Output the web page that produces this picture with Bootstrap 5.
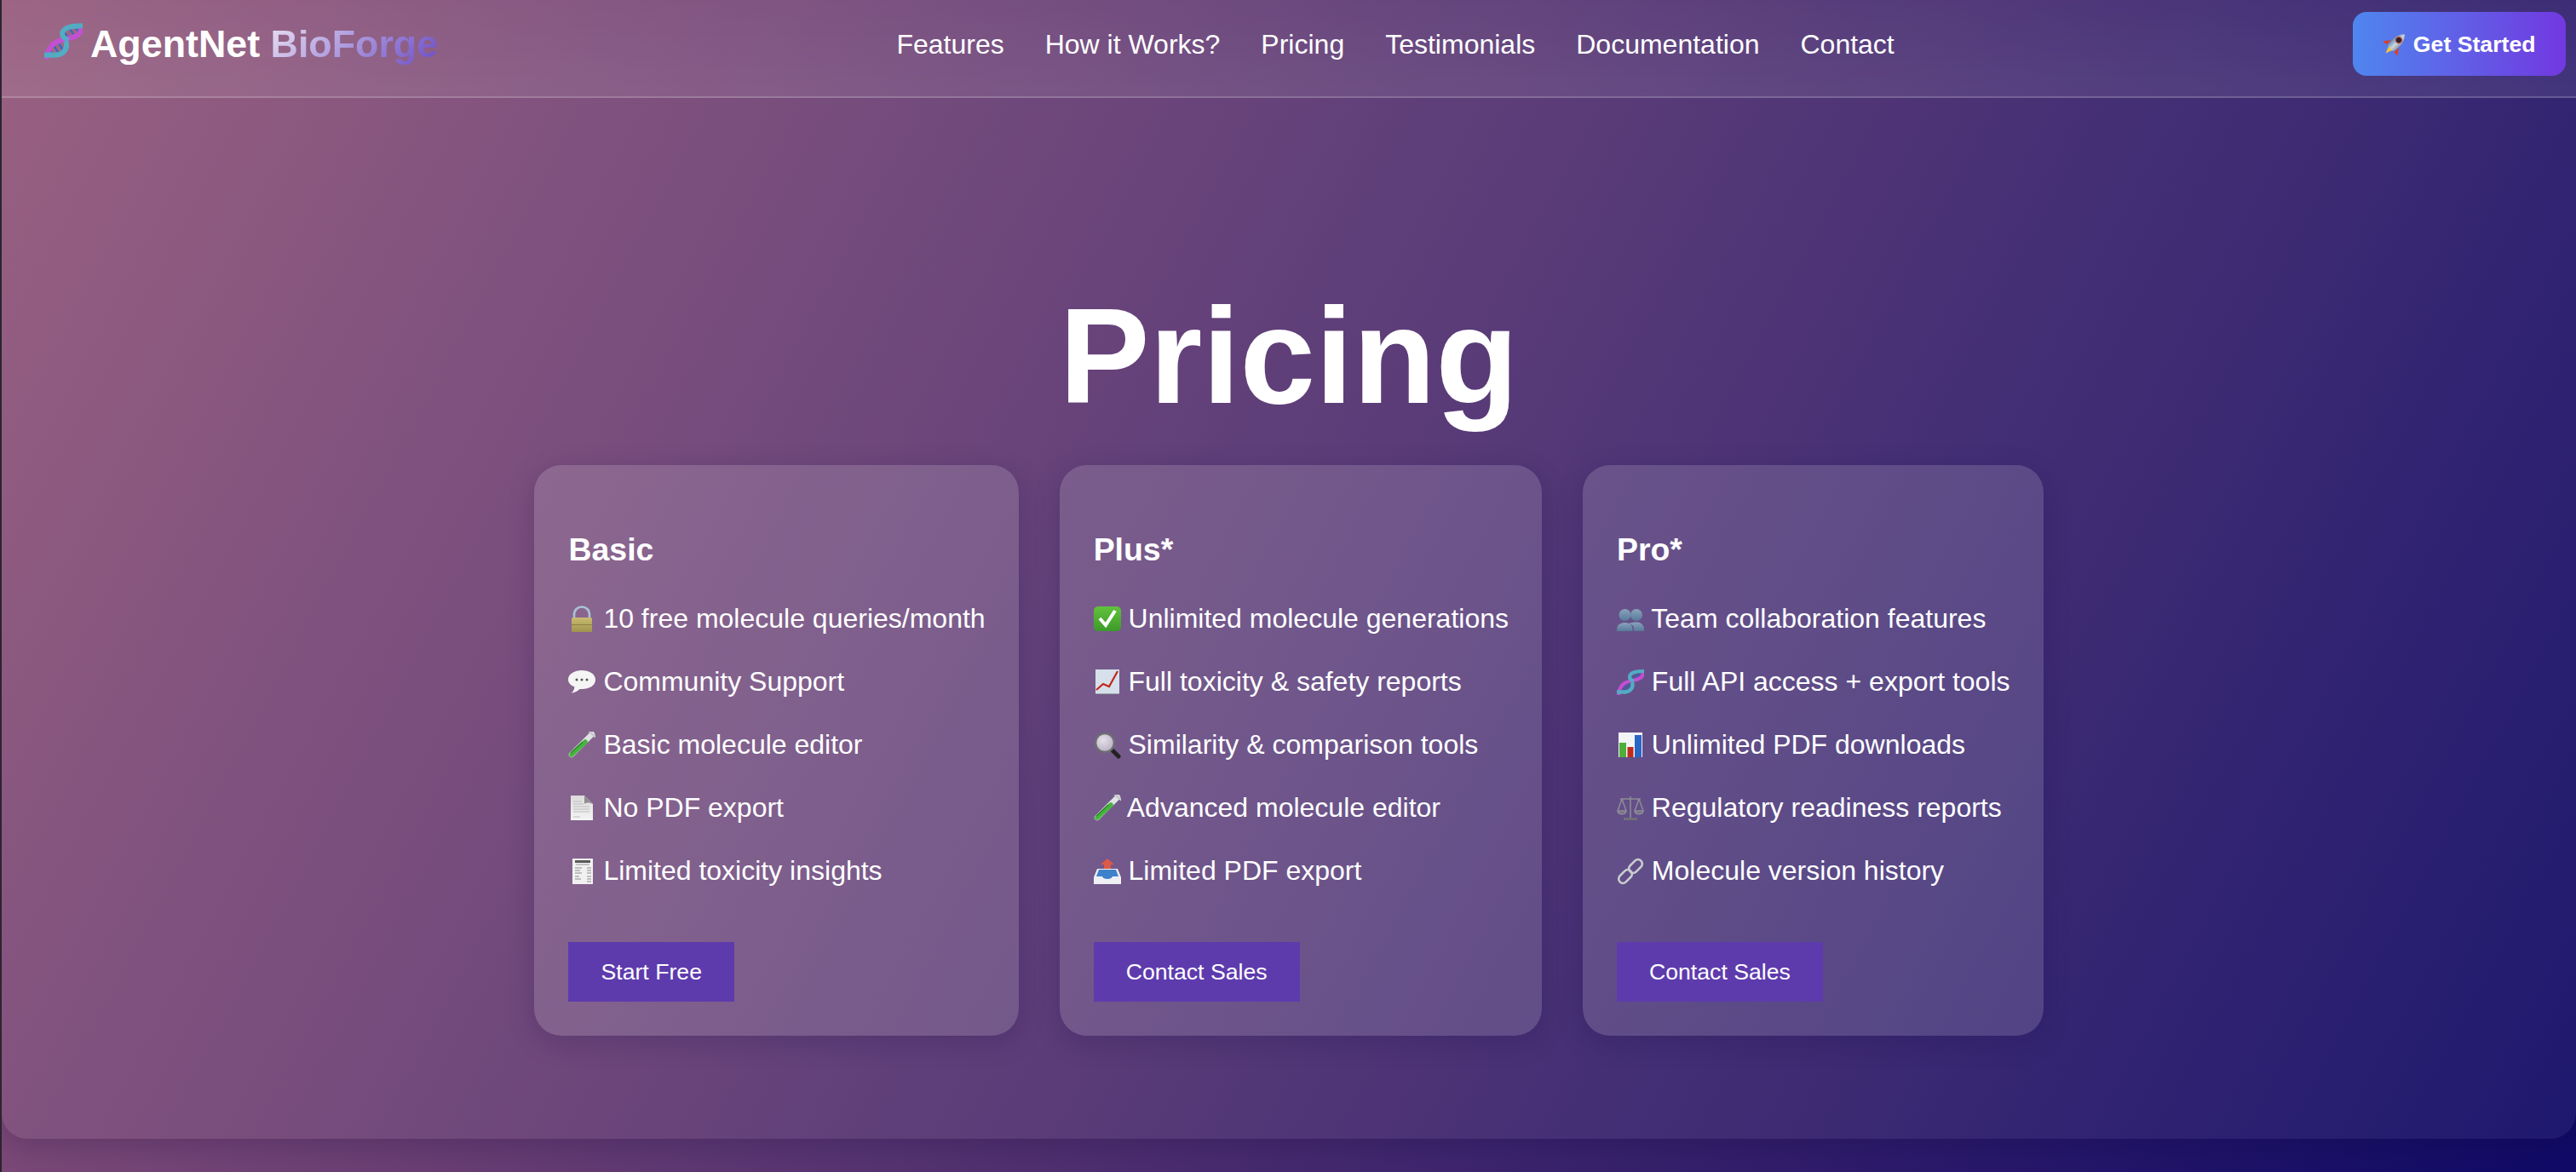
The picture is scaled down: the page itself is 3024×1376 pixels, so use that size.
<!DOCTYPE html>
<html lang="en">
<head>
<meta charset="utf-8">
<title>AgentNet BioForge – Pricing</title>
<link href="https://cdn.jsdelivr.net/npm/bootstrap@5.3.0/dist/css/bootstrap.min.css" rel="stylesheet">
<style>
html,body{height:1376px;overflow:hidden}
body{font-family:"Liberation Sans",Arial,sans-serif;color:#fff;background:linear-gradient(118deg,#93577a 0%,#100a66 100%);border-left:2px solid #2b2530;}
.defs-box{display:block;width:0;height:0}
.shell{margin:0;height:1337px;border-radius:0 0 30px 30px;background:rgba(255,255,255,.06);box-shadow:0 8px 32px rgba(10,5,50,.2)}
.topbar{height:115px;padding:14px 12px 24px 50px;border-bottom:2px solid rgba(255,255,255,.22);background:linear-gradient(180deg,rgba(255,255,255,.03),rgba(255,255,255,.08));flex-wrap:nowrap}
.brand-line{font-size:44.8px;font-weight:700;color:#fff;padding:0;margin:0;line-height:1.2;letter-spacing:0}
.brand-line:hover{color:#fff}
.brand-line .emo{width:45px;height:45px;vertical-align:-4px;margin-right:9px}
.brand-grad{background:linear-gradient(135deg,#e8e0f2 0%,#6a4cc6 100%);-webkit-background-clip:text;background-clip:text;color:transparent}
.menu-row{gap:48px;flex-wrap:nowrap}
.menu-row .nav-link{font-size:32px;color:#fff;padding:0;line-height:1.5}
.cta-btn{width:250px;height:75px;padding:0;border:0;border-radius:16px;font-size:26.67px;font-weight:700;color:#fff;background:linear-gradient(90deg,#4f86ee,#7238e0)}
.cta-btn:hover{color:#fff}
.cta-btn .emo{width:28px;height:28px;vertical-align:-5px}
.hero{padding-top:208px}
.hero-title{font-size:159px;font-weight:700;line-height:190px;margin:0 0 33px;text-align:center}
.tier-row{gap:48px}
.tier{flex:0 0 auto;background:rgba(255,255,255,.14);border:0;border-radius:32px;color:#fff;box-shadow:0 8px 32px rgba(20,10,70,.2)}
.tier .card-body{padding:77px 39px 40px 40px;flex:0 0 auto}
.tier .card-title{font-size:37.44px;font-weight:700;line-height:44px;margin:0 0 35px}
.tier ul{margin:0 0 60px;padding:0;list-style:none}
.tier li{font-size:32px;line-height:48px;margin-bottom:26px;white-space:nowrap}
.tier li:last-child{margin-bottom:0}
.emo{display:inline-block;width:32px;height:32px;vertical-align:-6px}
.plan-btn{display:inline-block;height:70px;line-height:70px;padding:0 38px;border:0;border-radius:0;background:#5e3bad;color:#fff;font-size:26.67px}
.plan-btn:hover{background:#5e3bad;color:#fff}
</style>
</head>
<body>
<svg class="defs-box" aria-hidden="true">
<defs>
<linearGradient id="g-gold" x1="0" y1="0" x2="0" y2="1"><stop offset="0" stop-color="#c9bb70"/><stop offset="1" stop-color="#a0934e"/></linearGradient>
<linearGradient id="g-green" x1="0" y1="0" x2="0" y2="1"><stop offset="0" stop-color="#62c23c"/><stop offset="1" stop-color="#3d9a2a"/></linearGradient>
<linearGradient id="g-page" x1="0" y1="0" x2="0" y2="1"><stop offset="0" stop-color="#dcdcdc"/><stop offset="1" stop-color="#f4f4f4"/></linearGradient>
<linearGradient id="g-slate" x1="0" y1="0" x2="0" y2="1"><stop offset="0" stop-color="#8aa2bc"/><stop offset="1" stop-color="#567a9a"/></linearGradient>
<linearGradient id="g-rocket" x1="0" y1="0" x2="1" y2="0"><stop offset="0" stop-color="#5f8db8"/><stop offset=".55" stop-color="#cfd6dc"/><stop offset="1" stop-color="#8f9aa6"/></linearGradient>
<radialGradient id="g-lens" cx=".4" cy=".35" r=".7"><stop offset="0" stop-color="#e6e0ea"/><stop offset="1" stop-color="#b6aec2"/></radialGradient>
</defs>
<symbol id="i-lock" viewBox="0 0 32 32"><path d="M7 16V11C7 5 11 1.500 16 1.500S25 5 25 11v5" fill="none" stroke="#a9c3d6" stroke-width="2.600"/><rect x="4" y="14" width="24" height="17" rx="1.500" fill="url(#g-gold)"/><rect x="4" y="22" width="24" height="1" fill="#8d8244"/></symbol>
<symbol id="i-bubble" viewBox="0 0 32 32"><path d="M16 2C7.500 2 0 6 0 13c0 4 3.500 7 7.500 8.500C7 25 5.500 27.500 3.500 29 8 28 11.500 26 13.500 24c1 .1 1.700.1 2.500.1 8.500 0 16-4 16-11S24.500 2 16 2Z" fill="#f5f5f5"/><circle cx="10" cy="13" r="1.500" fill="#555"/><circle cx="16" cy="13" r="1.500" fill="#555"/><circle cx="22" cy="13" r="1.500" fill="#555"/></symbol>
<symbol id="i-tube" viewBox="0 0 32 32"><path d="M28 3 4 27" stroke="#dfe3e4" stroke-width="6.500" stroke-linecap="round"/><path d="M20 12 4 27" stroke="#45b53c" stroke-width="5.500" stroke-linecap="round"/><path d="M17 12 3 25" stroke="#2a7e28" stroke-width="1.300"/><path d="M25 0 32 6" stroke="#c8c8cc" stroke-width="2.500" stroke-linecap="round"/></symbol>
<symbol id="i-page" viewBox="0 0 32 32"><path d="M3 1H19L29 11V30H3Z" fill="url(#g-page)"/><path d="M19 1 29 11C25 9 21 9 19 11Z" fill="#8f8f8f"/><g stroke="#bcbcbc"><path d="M6 8H16M6 11H18M6 14H25M6 17H25M6 20H25M6 26H14"/></g></symbol>
<symbol id="i-receipt" viewBox="0 0 32 32"><rect x="5" y="1" width="24" height="30" fill="#f1f1f1"/><rect x="8" y="3" width="18" height="3" fill="#5a5a5a"/><rect x="9" y="7.500" width="16" height="1" fill="#9a9a9a"/><g stroke="#8a8a8a" stroke-width="1"><path d="M8 12H16M22 12H27M8 15H14M22 15H27M8 18H16M22 18H27M8 22H13M22 22H27M8 25H15M22 25H27M22 28H27"/></g></symbol>
<symbol id="i-check" viewBox="0 0 32 32"><rect x="0" y="1" width="32" height="29" rx="5" fill="url(#g-green)"/><path d="M7 15 14 23 25 6" fill="none" stroke="#fff" stroke-width="4"/></symbol>
<symbol id="i-chart" viewBox="0 0 32 32"><rect x="2" y="1" width="28" height="28" fill="#d6e0ea"/><path d="M2 29H30V30H2Z" fill="#9aa"/><path d="M3 25 11 18 18 21 28 3" fill="none" stroke="#c0281c" stroke-width="2.200"/></symbol>
<symbol id="i-lens" viewBox="0 0 32 32"><path d="M20 20 29 29" stroke="#222" stroke-width="5" stroke-linecap="round"/><circle cx="13" cy="13" r="11" fill="url(#g-lens)" stroke="#6e6e72" stroke-width="2.500"/></symbol>
<symbol id="i-outbox" viewBox="0 0 32 32"><path d="M16 1 24 8H20V14H12V8H8Z" fill="#dd5a48"/><path d="M4 13H28L32 23V31H0V23Z" fill="#eef0f3"/><path d="M6 14H26L29 22H22C21 26 11 26 10 22H3Z" fill="#3f82cc"/></symbol>
<symbol id="i-team" viewBox="0 0 32 32"><g fill="url(#g-slate)"><circle cx="9.500" cy="11" r="7"/><path d="M0 28C0 22 5 20 9.500 20s9 2 9 8v2H0Z"/><circle cx="23" cy="11" r="7"/><path d="M14 21c2-1 6-1.500 9-1.500 4.500 0 9 2.500 9 8.500v2H20v-3c0-3-2-5-6-6Z"/></g></symbol>
<symbol id="i-dna" viewBox="0 0 32 32"><g stroke="#3566c0" stroke-width="1.500"><path d="M20 4 25 11M25 3 29 9M16 8 20 13M11 16 16 24M7 18 12 26M4 22 7 27"/></g><path d="M31 2C32 10 27 12 21 13.500 12 15 3 17 2 31" fill="none" stroke="#c44fd2" stroke-width="4.200"/><path d="M32 3C24 3 15 4 15 10 15 13 18 14 20 15" fill="none" stroke="#52acc4" stroke-width="4.200"/><path d="M18 16C20 22 16 27 10 27.500H0" fill="none" stroke="#52acc4" stroke-width="4.400"/></symbol>
<symbol id="i-bars" viewBox="0 0 32 32"><rect x="2" y="1" width="28" height="29" fill="#f2f4f6"/><rect x="3" y="13" width="8" height="17" fill="#4eae3a"/><rect x="12.500" y="18" width="7" height="12" fill="#bf2b1c"/><rect x="21" y="4" width="8" height="26" fill="#2a66c4"/></symbol>
<symbol id="i-scale" viewBox="0 0 32 32"><g fill="none" stroke="#8d8d95" stroke-width="1.500"><path d="M16 2V27M4 5H28M6 5 1 19M6 5 11 19M26 5 21 19M26 5 31 19"/><path d="M1 19C2 24 10 24 11 19ZM21 19C22 24 30 24 31 19Z" fill="#8d8d95" fill-opacity=".5"/></g><path d="M8 27H24V30H8Z" fill="#6f6f76"/></symbol>
<symbol id="i-link" viewBox="0 0 32 32"><g fill="none" stroke="#c8ccd0" stroke-width="2.600"><rect x="-9" y="-5" width="18" height="10" rx="5" transform="translate(10 22) rotate(-45)"/><rect x="-9" y="-5" width="18" height="10" rx="5" transform="translate(22 10) rotate(-45)"/></g></symbol>
<symbol id="i-rocket" viewBox="0 0 32 32"><g transform="rotate(45 16 16)"><path d="M9 15 2 24 9 24ZM23 15 30 24 23 24Z" fill="#d8402c"/><path d="M12 23 16 33 20 23Z" fill="#f4c23c"/><path d="M16-3C24 4 24 16 21 24H11C8 16 8 4 16-3Z" fill="url(#g-rocket)"/><circle cx="16" cy="8" r="4.200" fill="#2a2226" stroke="#c0565a" stroke-width="1.500"/></g></symbol>
</svg>

<div class="shell">
  <nav class="navbar topbar d-flex align-items-center justify-content-between">
    <a class="navbar-brand brand-line" href="#"><svg class="emo"><use href="#i-dna"/></svg>AgentNet <span class="brand-grad">BioForge</span></a>
    <ul class="nav menu-row">
      <li class="nav-item"><a class="nav-link" href="#">Features</a></li>
      <li class="nav-item"><a class="nav-link" href="#">How it Works?</a></li>
      <li class="nav-item"><a class="nav-link" href="#">Pricing</a></li>
      <li class="nav-item"><a class="nav-link" href="#">Testimonials</a></li>
      <li class="nav-item"><a class="nav-link" href="#">Documentation</a></li>
      <li class="nav-item"><a class="nav-link" href="#">Contact</a></li>
    </ul>
    <button class="btn cta-btn" type="button"><svg class="emo"><use href="#i-rocket"/></svg> Get Started</button>
  </nav>
  <section class="hero">
    <h1 class="hero-title">Pricing</h1>
    <div class="d-flex justify-content-center tier-row">
      <div class="card tier">
        <div class="card-body">
          <h3 class="card-title">Basic</h3>
          <ul>
            <li><svg class="emo"><use href="#i-lock"/></svg> 10 free molecule queries/month</li>
            <li><svg class="emo"><use href="#i-bubble"/></svg> Community Support</li>
            <li><svg class="emo"><use href="#i-tube"/></svg> Basic molecule editor</li>
            <li><svg class="emo"><use href="#i-page"/></svg> No PDF export</li>
            <li><svg class="emo"><use href="#i-receipt"/></svg> Limited toxicity insights</li>
          </ul>
          <a class="btn plan-btn" href="#">Start Free</a>
        </div>
      </div>
      <div class="card tier">
        <div class="card-body">
          <h3 class="card-title">Plus*</h3>
          <ul>
            <li><svg class="emo"><use href="#i-check"/></svg> Unlimited molecule generations</li>
            <li><svg class="emo"><use href="#i-chart"/></svg> Full toxicity &amp; safety reports</li>
            <li><svg class="emo"><use href="#i-lens"/></svg> Similarity &amp; comparison tools</li>
            <li><svg class="emo"><use href="#i-tube"/></svg> Advanced molecule editor</li>
            <li><svg class="emo"><use href="#i-outbox"/></svg> Limited PDF export</li>
          </ul>
          <a class="btn plan-btn" href="#">Contact Sales</a>
        </div>
      </div>
      <div class="card tier">
        <div class="card-body">
          <h3 class="card-title">Pro*</h3>
          <ul>
            <li><svg class="emo"><use href="#i-team"/></svg> Team collaboration features</li>
            <li><svg class="emo"><use href="#i-dna"/></svg> Full API access + export tools</li>
            <li><svg class="emo"><use href="#i-bars"/></svg> Unlimited PDF downloads</li>
            <li><svg class="emo"><use href="#i-scale"/></svg> Regulatory readiness reports</li>
            <li><svg class="emo"><use href="#i-link"/></svg> Molecule version history</li>
          </ul>
          <a class="btn plan-btn" href="#">Contact Sales</a>
        </div>
      </div>
    </div>
  </section>
</div>
<script src="https://cdn.jsdelivr.net/npm/bootstrap@5.3.0/dist/js/bootstrap.bundle.min.js"></script>
</body>
</html>
